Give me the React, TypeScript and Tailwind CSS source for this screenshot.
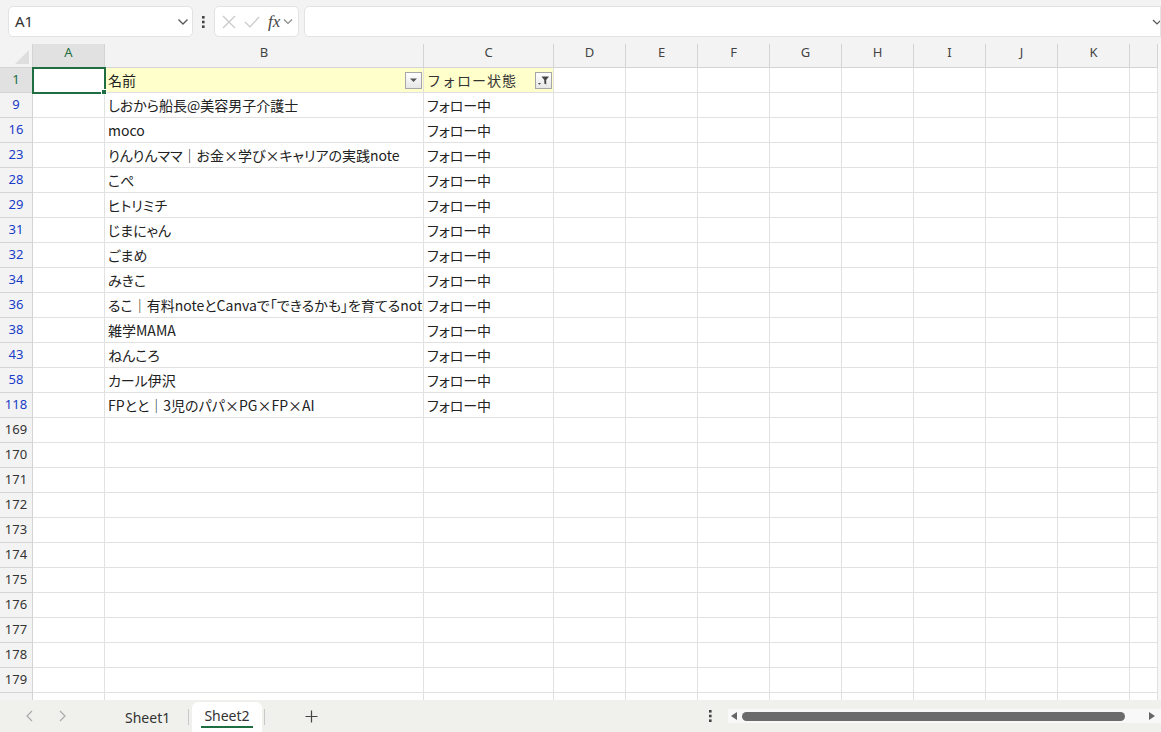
import React from "react";

const cols = ["A", "B", "C", "D", "E", "F", "G", "H", "I", "J", "K", ""];

type Row = { n: string; b?: string; c?: string; blue?: boolean };

const rows: Row[] = [
  { n: "9", b: "しおから船長@美容男子介護士", c: "フォロー中", blue: true },
  { n: "16", b: "moco", c: "フォロー中", blue: true },
  { n: "23", b: "りんりんママ｜お金×学び×キャリアの実践note", c: "フォロー中", blue: true },
  { n: "28", b: "こぺ", c: "フォロー中", blue: true },
  { n: "29", b: "ヒトリミチ", c: "フォロー中", blue: true },
  { n: "31", b: "じまにゃん", c: "フォロー中", blue: true },
  { n: "32", b: "ごまめ", c: "フォロー中", blue: true },
  { n: "34", b: "みきこ", c: "フォロー中", blue: true },
  { n: "36", b: "るこ｜有料noteとCanvaで「できるかも」を育てるnote", c: "フォロー中", blue: true },
  { n: "38", b: "雑学MAMA", c: "フォロー中", blue: true },
  { n: "43", b: "ねんころ", c: "フォロー中", blue: true },
  { n: "58", b: "カール伊沢", c: "フォロー中", blue: true },
  { n: "118", b: "FPとと｜3児のパパ×PG×FP×AI", c: "フォロー中", blue: true },
  { n: "169" },
  { n: "170" },
  { n: "171" },
  { n: "172" },
  { n: "173" },
  { n: "174" },
  { n: "175" },
  { n: "176" },
  { n: "177" },
  { n: "178" },
  { n: "179" },
  { n: "180" },
];

const gridCols =
  "grid grid-cols-[33px_72px_319px_130px_72px_72px_72px_72px_72px_72px_72px_72px_28px_4px]";

const cjk = "font-['Noto_Sans_CJK_JP','Noto_Sans',sans-serif]";
const palt = "[font-feature-settings:'palt']";

function FilterButton({ active }: { active?: boolean }) {
  return (
    <div className="w-[17px] h-[17px] border border-[#a6a6a6] bg-gradient-to-b from-white to-[#e6e6e6] flex items-center justify-center">
      {active ? (
        <svg width="13" height="11" viewBox="0 0 13 11">
          <path d="M1 8 L4 8 L2.5 9.8 Z" fill="#444" />
          <path d="M4.5 1.5 H12 L9.2 5 V9.5 L7.3 8.5 V5 Z" fill="#444" />
        </svg>
      ) : (
        <svg width="9" height="6" viewBox="0 0 9 6">
          <path d="M1 1.5 H8 L4.5 5 Z" fill="#555" />
        </svg>
      )}
    </div>
  );
}

function Chevron() {
  return (
    <svg width="12" height="8" viewBox="0 0 12 8" fill="none">
      <path d="M1.5 1.5 L6 6 L10.5 1.5" stroke="#555" strokeWidth="1.3" />
    </svg>
  );
}

function Dots() {
  return (
    <svg width="3" height="12" viewBox="0 0 3 12">
      <rect x="0" y="0" width="2.6" height="2.6" fill="#444" />
      <rect x="0" y="4.7" width="2.6" height="2.6" fill="#444" />
      <rect x="0" y="9.4" width="2.6" height="2.6" fill="#444" />
    </svg>
  );
}

export default function App() {
  return (
    <div className="w-[1161px] h-[732px] overflow-hidden flex flex-col bg-white text-[#222] font-['Noto_Sans','Noto_Sans_CJK_JP',sans-serif]">
      {/* Top formula bar */}
      <div className="h-[44px] shrink-0 bg-[#f3f3f3] flex items-start pt-[6px] pl-[8px]">
        <div className="w-[185px] h-[31px] bg-white border border-[#e3e3e3] rounded-[5px] flex items-center pl-[6px] pr-[3px] justify-between">
          <span className="text-[15px] text-[#333]">A1</span>
          <Chevron />
        </div>
        <div className="w-[21px] h-[31px] flex items-center justify-center">
          <Dots />
        </div>
        <div className="w-[85px] h-[31px] bg-white border border-[#e3e3e3] rounded-[5px] flex items-center pl-[4px]">
          <svg width="18" height="18" viewBox="0 0 18 18" className="ml-[1px]">
            <path d="M3 3 L15 15 M15 3 L3 15" stroke="#c8c8c8" strokeWidth="1.2" />
          </svg>
          <svg width="18" height="18" viewBox="0 0 18 18" className="ml-[5px]">
            <path d="M2 9 L7 14 L16 4" stroke="#c8c8c8" strokeWidth="1.2" fill="none" />
          </svg>
          <span className="ml-[7px] text-[17px] italic text-[#444] leading-none font-['Liberation_Serif','DejaVu_Serif',serif]">
            fx
          </span>
          <svg width="10" height="7" viewBox="0 0 10 7" fill="none" className="ml-[3px]">
            <path d="M1 1.5 L5 5.5 L9 1.5" stroke="#888" strokeWidth="1.1" />
          </svg>
        </div>
        <div className="ml-[5px] flex-1 h-[31px] bg-white border border-[#e3e3e3] rounded-l-[5px] flex items-center justify-end">
          <svg width="8" height="8" viewBox="0 0 8 8" fill="none">
            <path d="M1 2 L5 6 L9 2" stroke="#555" strokeWidth="1.2" />
          </svg>
        </div>
      </div>

      {/* Grid */}
      <div className="flex-1 overflow-hidden">
        {/* Column header row */}
        <div className={`${gridCols} h-[24px] bg-[#f3f3f3]`}>
          <div className="border-r border-b border-[#d4d4d4] relative overflow-hidden">
            <svg className="absolute right-[3px] bottom-[3px]" width="14" height="14" viewBox="0 0 14 14">
              <path d="M14 0 L14 14 L0 14 Z" fill="#dedede" />
            </svg>
          </div>
          {cols.map((c, i) => (
            <div
              key={i}
              className={`border-r border-b border-[#d4d4d4] flex items-start justify-center text-[13px] leading-[17px] ${
                c === "A" ? "bg-[#e1e1e1] text-[#1e6e42]" : "text-[#444]"
              }`}
            >
              {c}
            </div>
          ))}
          <div className="bg-[#f7f7f7]" />
        </div>

        {/* Row 1 (table headers) */}
        <div className={`${gridCols} h-[25px] ${cjk}`}>
          <div className="bg-[#e1e1e1] border-r border-b border-[#d4d4d4] flex items-center justify-center text-[13px] text-[#1e6e42] font-['Noto_Sans',sans-serif]">
            1
          </div>
          <div className="relative border-r border-b border-[#e1e1e1]">
            <div className="absolute -left-[1px] -top-[1px] w-[74px] h-[27px] border-2 border-[#1e6e42] z-10" />
            <div className="absolute -right-[3px] -bottom-[3px] w-[6px] h-[6px] bg-[#1e6e42] border border-white z-20" />
          </div>
          <div className="bg-[#ffffcc] border-r border-b border-[#e1e1e1] flex items-center pl-[3px] pr-[1px] justify-between text-[14px]">
            <span>名前</span>
            <FilterButton />
          </div>
          <div className="bg-[#ffffcc] border-r border-b border-[#e1e1e1] flex items-center pl-[3px] pr-[1px] justify-between text-[14px]">
            <span className="text-[#333] tracking-[1px]">フォロー状態</span>
            <FilterButton active />
          </div>
          {Array.from({ length: 9 }).map((_, i) => (
            <div key={i} className="border-r border-b border-[#e1e1e1]" />
          ))}
          <div className="bg-[#f7f7f7]" />
        </div>

        {rows.map((r) => (
          <div key={r.n} className={`${gridCols} h-[25px] ${cjk} ${palt}`}>
            <div
              className={`bg-[#f3f3f3] border-r border-b border-[#d4d4d4] flex items-center justify-center text-[13px] font-['Noto_Sans',sans-serif] ${
                r.blue ? "text-[#1a3cc8]" : "text-[#333]"
              }`}
            >
              {r.n}
            </div>
            <div className="border-r border-b border-[#e1e1e1]" />
            <div className="border-r border-b border-[#e1e1e1] flex items-center pl-[3px] text-[14px] whitespace-nowrap overflow-hidden">
              {r.b}
            </div>
            <div className="border-r border-b border-[#e1e1e1] flex items-center pl-[3px] text-[14px] whitespace-nowrap overflow-hidden">
              {r.c}
            </div>
            {Array.from({ length: 9 }).map((_, i) => (
              <div key={i} className="border-r border-b border-[#e1e1e1]" />
            ))}
            <div className="bg-[#f7f7f7]" />
          </div>
        ))}
      </div>

      {/* Bottom bar */}
      <div className="h-[32px] shrink-0 bg-[#f0f0ec] flex items-stretch text-[14px] text-[#333]">
        <div className="w-[120px] flex items-center pl-[25px] gap-[22px]">
          <svg width="10" height="12" viewBox="0 0 10 12" fill="none">
            <path d="M7 1 L2 6 L7 11" stroke="#aaa" strokeWidth="1.2" />
          </svg>
          <svg width="10" height="12" viewBox="0 0 10 12" fill="none">
            <path d="M3 1 L8 6 L3 11" stroke="#aaa" strokeWidth="1.2" />
          </svg>
        </div>
        <div className="w-[68px] flex items-center justify-start pl-[5px] pt-[3px]">Sheet1</div>
        <div className="w-[1px] h-[16px] bg-[#c8c8c8] self-center mt-[2px]" />
        <div className="ml-[3px] w-[70px] mt-[2px] bg-white rounded-t-[6px] flex flex-col items-center justify-center">
          <span className="text-[14px] leading-[20px]">Sheet2</span>
          <div className="w-[52px] h-[2px] bg-[#1e6e42]" />
        </div>
        <div className="ml-[2px] w-[1px] h-[16px] bg-[#c8c8c8] self-center mt-[2px]" />
        <div className="ml-[40px] flex items-center pt-[1px]">
          <svg width="13" height="13" viewBox="0 0 13 13" fill="none">
            <path d="M6.5 0.5 V12.5 M0.5 6.5 H12.5" stroke="#444" strokeWidth="1.2" />
          </svg>
        </div>
        <div className="ml-[391px] flex items-center">
          <Dots />
        </div>
        <div className="ml-[16px] flex-1 h-[14px] self-center bg-[#f8f8f8] flex items-center pl-[3px] pr-[6px]">
          <svg width="7" height="8" viewBox="0 0 7 8">
            <path d="M6 0 V8 L0 4 Z" fill="#666" />
          </svg>
          <div className="ml-[4px] w-[383px] h-[9px] rounded-full bg-[#6b6b6b]" />
          <div className="flex-1" />
          <svg width="7" height="8" viewBox="0 0 7 8">
            <path d="M1 0 V8 L7 4 Z" fill="#666" />
          </svg>
        </div>
      </div>
    </div>
  );
}
